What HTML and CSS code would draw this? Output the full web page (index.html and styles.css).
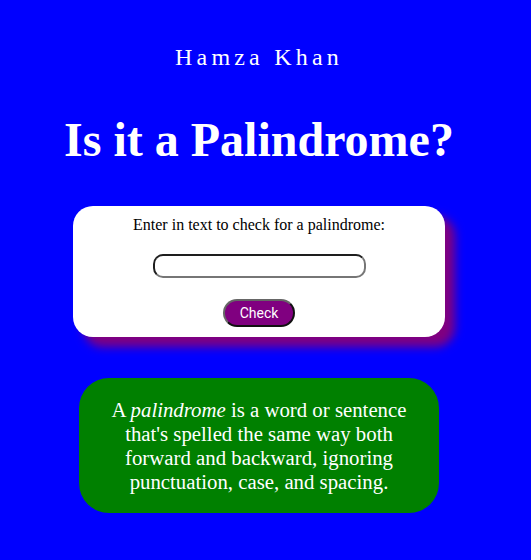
FILE: index.html
```html
<!DOCTYPE html>
<html lang="en">
<head>
<meta charset="utf-8">
<title>Palindrome Checker</title>
<link rel="stylesheet" href="styles.css">
</head>
<body>
<main class="page">
  <p class="author">Hamza Khan</p>
  <h1 class="title">Is it a Palindrome?</h1>
  <div class="card">
    <label class="label" for="text-input">Enter in text to check for a palindrome:</label>
    <input class="field" id="text-input" type="text">
    <button class="check" type="button">Check</button>
  </div>
  <div class="info">
    <p class="info-text">A <em>palindrome</em> is a word or sentence that's spelled the same way both forward and backward, ignoring punctuation, case, and spacing.</p>
  </div>
</main>
</body>
</html>
```

FILE: styles.css
```css
html, body {
  margin: 0;
  padding: 0;
}
body {
  background: #0000ff;
  font-family: "Liberation Serif", "Times New Roman", serif;
  min-height: 560px;
}
.page {
  width: 518px;
  display: flex;
  flex-direction: column;
  align-items: center;
  text-align: center;
}
.author {
  margin: 43px 0 0;
  color: #ffffff;
  font-size: 24px;
  line-height: 28px;
  letter-spacing: 4.2px;
}
.title {
  margin: 41px 0 0;
  color: #ffffff;
  font-size: 48px;
  line-height: 56px;
  font-weight: bold;
}
.card {
  margin-top: 38px;
  width: 372px;
  box-sizing: border-box;
  padding: 10px 0;
  background: #ffffff;
  border-radius: 20px;
  box-shadow: 10px 10px 10px #800080;
  display: flex;
  flex-direction: column;
  align-items: center;
}
.label {
  font-size: 16px;
  line-height: 18px;
  color: #000;
}
.field {
  margin-top: 20px;
  width: 213px;
  height: 24px;
  box-sizing: border-box;
  border-style: solid;
  border-width: 2px;
  border-color: #1e1e1e #767676 #767676 #1e1e1e;
  border-radius: 10px;
  background: #fff;
  padding: 0 8px;
}
.check {
  margin-top: 21px;
  width: 72px;
  height: 28px;
  box-sizing: border-box;
  background: #800080;
  color: #ffffff;
  font-family: Roboto, "Liberation Sans", Arial, sans-serif;
  font-size: 14px;
  font-weight: 400;
  border-style: solid;
  border-width: 2px;
  border-color: #666666 #111111 #111111 #666666;
  border-radius: 15px;
  padding: 0;
}
.info {
  margin-top: 41px;
  width: 360px;
  height: 135px;
  box-sizing: border-box;
  padding: 0 20px;
  background: #008000;
  border-radius: 30px;
  display: flex;
  align-items: center;
  justify-content: center;
}
.info-text {
  margin: 0;
  color: #ffffff;
  font-size: 20.8px;
  line-height: 24px;
}
```
